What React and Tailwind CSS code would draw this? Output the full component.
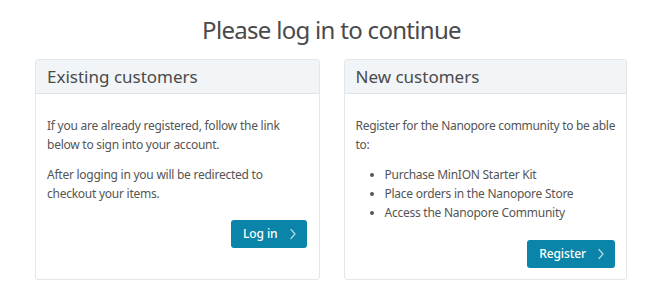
import React from 'react';

const Chevron = () => (
  <svg width="8" height="12" viewBox="0 0 8 12" fill="none" className="ml-[11px]">
    <path d="M2 1.5L6 6L2 10.5" stroke="currentColor" strokeOpacity="0.7" strokeWidth="1.2" strokeLinecap="round" strokeLinejoin="round" />
  </svg>
);

function Card({ title, children, button, className, btnClass = '' }) {
  return (
    <div className={`flex flex-col rounded-[3px] border border-[#e3e7ea] bg-white ${className}`}>
      <div className="h-[34px] flex items-center px-[11px] bg-[#f1f5f8] border-b border-[#dfe4e8] rounded-t-[3px]">
        <h2 className="text-[17px] text-[#4a4a4a] leading-none">{title}</h2>
      </div>
      <div className="flex flex-col pl-[11px] pr-[11px] pt-[12px] pb-[11px]">
        {children}
        <div className={`flex justify-end pt-[17px] ${btnClass}`}>
          <button className="h-[28px] flex items-center rounded-[3px] bg-[#0a84a8] text-white text-[12px] font-medium tracking-[-0.1px] pl-3 pr-[10px]">
            {button}
            <Chevron />
          </button>
        </div>
      </div>
    </div>
  );
}

export default function App() {
  return (
    <div className="w-[669px] h-[297px] bg-white font-['Noto_Sans',sans-serif] text-[#555]">
      <h1 className="text-center text-[24px] tracking-[-0.7px] text-[#4a4a4a] pt-[13px] pr-[6px] leading-[34px]">
        Please log in to continue
      </h1>
      <div className="flex items-stretch gap-[24px] pl-[35px] pr-[42px] mt-[12px]">
        <Card title="Existing customers" button="Log in" className="w-[285px]" btnClass="mr-[1px]">
          <p className="text-[12px] tracking-[-0.25px] leading-[19px] mt-[10px]">
            If you are already registered, follow the link below to sign into your account.
          </p>
          <p className="text-[12px] tracking-[-0.25px] leading-[19px] mt-[11px]">
            After logging in you will be redirected to checkout your items.
          </p>
        </Card>
        <Card title="New customers" button="Register" className="w-[284px]" btnClass="pt-[18px]">
          <p className="text-[12px] tracking-[-0.3px] leading-[19px] mt-[10px] -mr-[8px]">
            Register for the Nanopore community to be able to:
          </p>
          <ul className="list-disc pl-[29px] mt-[11px] text-[12px] tracking-[-0.25px] leading-[19px] marker:text-[#555]">
            <li>Purchase MinION Starter Kit</li>
            <li>Place orders in the Nanopore Store</li>
            <li>Access the Nanopore Community</li>
          </ul>
        </Card>
      </div>
    </div>
  );
}
